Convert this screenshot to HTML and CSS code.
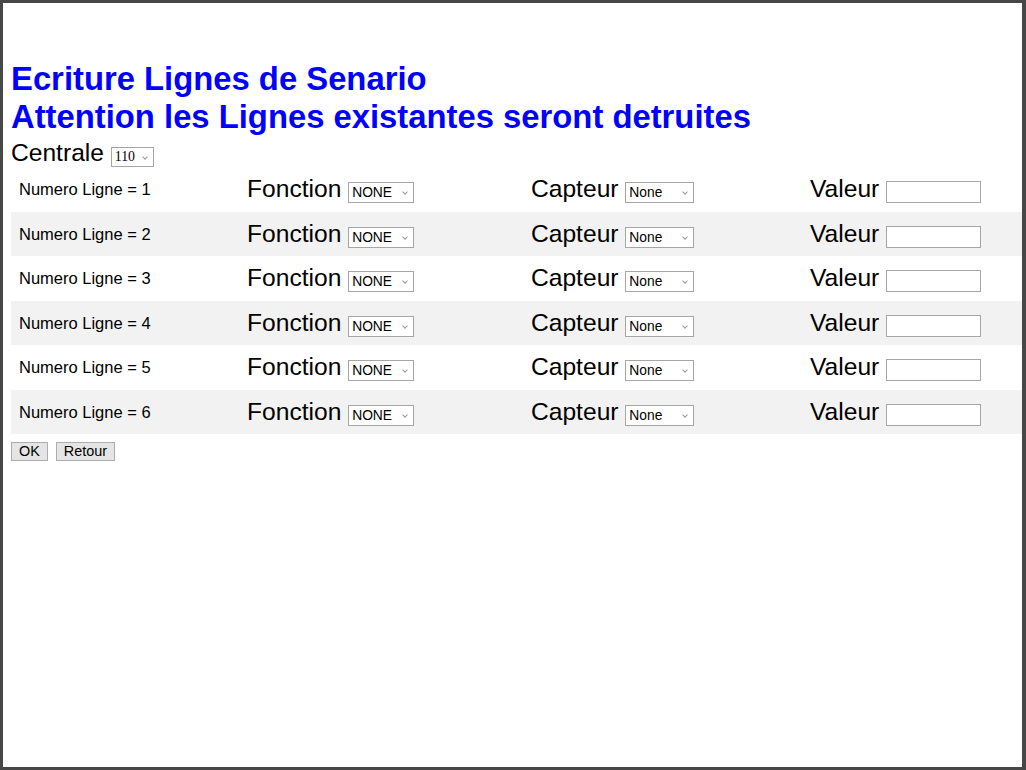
FILE: index.html
```html
<!DOCTYPE html>
<html lang="fr">
<head>
<meta charset="utf-8">
<title>Ecriture Lignes de Senario</title>
<link rel="stylesheet" href="styles.css">
</head>
<body>
<div class="frame">
  <div class="page">
    <h1 class="title">Ecriture Lignes de Senario<br>Attention les Lignes existantes seront detruites</h1>
    <div class="centrale">Centrale <span class="sel sel-centrale"><span class="sel-text">110</span></span></div>
    <div class="lines">
      <div class="row">
        <div class="cell num">Numero Ligne = 1</div>
        <div class="cell">Fonction <span class="sel sel-f"><span class="sel-text">NONE</span></span></div>
        <div class="cell">Capteur <span class="sel sel-c"><span class="sel-text">None</span></span></div>
        <div class="cell">Valeur <span class="inp"></span></div>
      </div>
      <div class="row alt">
        <div class="cell num">Numero Ligne = 2</div>
        <div class="cell">Fonction <span class="sel sel-f"><span class="sel-text">NONE</span></span></div>
        <div class="cell">Capteur <span class="sel sel-c"><span class="sel-text">None</span></span></div>
        <div class="cell">Valeur <span class="inp"></span></div>
      </div>
      <div class="row">
        <div class="cell num">Numero Ligne = 3</div>
        <div class="cell">Fonction <span class="sel sel-f"><span class="sel-text">NONE</span></span></div>
        <div class="cell">Capteur <span class="sel sel-c"><span class="sel-text">None</span></span></div>
        <div class="cell">Valeur <span class="inp"></span></div>
      </div>
      <div class="row alt">
        <div class="cell num">Numero Ligne = 4</div>
        <div class="cell">Fonction <span class="sel sel-f"><span class="sel-text">NONE</span></span></div>
        <div class="cell">Capteur <span class="sel sel-c"><span class="sel-text">None</span></span></div>
        <div class="cell">Valeur <span class="inp"></span></div>
      </div>
      <div class="row">
        <div class="cell num">Numero Ligne = 5</div>
        <div class="cell">Fonction <span class="sel sel-f"><span class="sel-text">NONE</span></span></div>
        <div class="cell">Capteur <span class="sel sel-c"><span class="sel-text">None</span></span></div>
        <div class="cell">Valeur <span class="inp"></span></div>
      </div>
      <div class="row alt">
        <div class="cell num">Numero Ligne = 6</div>
        <div class="cell">Fonction <span class="sel sel-f"><span class="sel-text">NONE</span></span></div>
        <div class="cell">Capteur <span class="sel sel-c"><span class="sel-text">None</span></span></div>
        <div class="cell">Valeur <span class="inp"></span></div>
      </div>
    </div>
    <div class="buttons">
      <span class="btn">OK</span>
      <span class="btn">Retour</span>
    </div>
  </div>
</div>
</body>
</html>
```
FILE: styles.css
```css
html, body {
  margin: 0;
  padding: 0;
  background: #ffffff;
}
.frame {
  width: 1026px;
  height: 770px;
  box-sizing: border-box;
  border-top: 3px solid #474747;
  border-left: 3px solid #474747;
  border-bottom: 3px solid #474747;
  border-right: 4px solid #474747;
  overflow: hidden;
  font-family: "Liberation Sans", Arial, sans-serif;
  color: #000;
}
.page {
  padding: 57px 0 0 8px;
}
.title {
  margin: 0;
  font-size: 32.8px;
  line-height: 38px;
  font-weight: bold;
  color: #0000ff;
}
.centrale {
  margin-top: 3px;
  font-size: 24.6px;
  line-height: 27px;
}
.sel {
  position: relative;
  display: inline-block;
  box-sizing: border-box;
  height: 21px;
  border: 1px solid #a6a6a6;
  background: #fff;
  font-size: 13.8px;
  line-height: 19px;
  padding-left: 3px;
  vertical-align: baseline;
}
.sel::after {
  content: "";
  position: absolute;
  right: 6px;
  top: 7px;
  width: 3px;
  height: 3px;
  border-right: 1px solid #9a9a9a;
  border-bottom: 1px solid #9a9a9a;
  transform: rotate(45deg);
}
.sel-text {
  display: inline-block;
}
.sel-centrale {
  width: 43px;
  height: 20px;
  line-height: 18px;
  font-family: "Liberation Serif", "Times New Roman", serif;
  font-size: 13.8px;
}
.sel-f {
  width: 66px;
}
.sel-c {
  width: 69px;
}
.inp {
  display: inline-block;
  box-sizing: border-box;
  width: 95px;
  height: 22px;
  border: 1px solid #a6a6a6;
  background: #fff;
  vertical-align: -6px;
}
.lines {
  width: 1011px;
  display: flex;
  flex-direction: column;
}
.row {
  height: 44.5px;
  display: grid;
  grid-template-columns: 228px 284px 279px 220px;
  align-items: center;
}
.row.alt {
  background: #f2f2f2;
}
.cell {
  padding-left: 8px;
  font-size: 24.6px;
  line-height: 27.6px;
  white-space: nowrap;
}
.cell.num {
  font-size: 16.5px;
  line-height: 18.4px;
}
.buttons {
  margin-top: 8px;
  display: flex;
  gap: 8px;
}
.btn {
  box-sizing: border-box;
  height: 19px;
  padding: 0 7px;
  border: 1px solid #adadad;
  background: #e5e5e5;
  font-size: 14.4px;
  line-height: 17px;
}
```
